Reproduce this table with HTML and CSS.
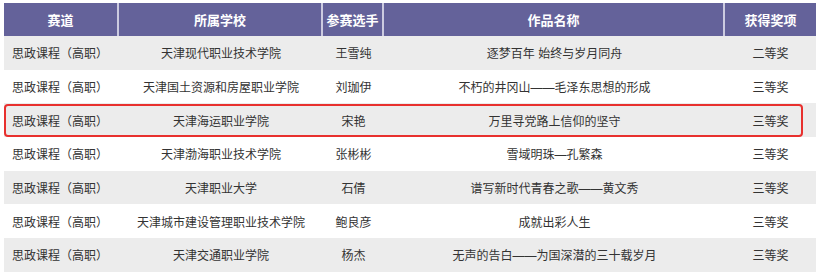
FILE: index.html
```html
<!DOCTYPE html>
<html lang="zh-CN">
<head>
<meta charset="utf-8">
<link rel="stylesheet" href="styles.css">
</head>
<body>
<div class="table">
  <div class="row head">
    <div class="cell">赛道</div>
    <div class="cell">所属学校</div>
    <div class="cell">参赛选手</div>
    <div class="cell">作品名称</div>
    <div class="cell">获得奖项</div>
  </div>
  <div class="row alt">
    <div class="cell first">思政课程（高职）</div>
    <div class="cell">天津现代职业技术学院</div>
    <div class="cell">王雪纯</div>
    <div class="cell">逐梦百年 始终与岁月同舟</div>
    <div class="cell">二等奖</div>
  </div>
  <div class="row">
    <div class="cell first">思政课程（高职）</div>
    <div class="cell">天津国土资源和房屋职业学院</div>
    <div class="cell">刘珈伊</div>
    <div class="cell">不朽的井冈山——毛泽东思想的形成</div>
    <div class="cell">三等奖</div>
  </div>
  <div class="row alt marked">
    <div class="cell first">思政课程（高职）</div>
    <div class="cell">天津海运职业学院</div>
    <div class="cell">宋艳</div>
    <div class="cell">万里寻党路上信仰的坚守</div>
    <div class="cell">三等奖</div>
  </div>
  <div class="row">
    <div class="cell first">思政课程（高职）</div>
    <div class="cell">天津渤海职业技术学院</div>
    <div class="cell">张彬彬</div>
    <div class="cell">雪域明珠—孔繁森</div>
    <div class="cell">三等奖</div>
  </div>
  <div class="row alt">
    <div class="cell first">思政课程（高职）</div>
    <div class="cell">天津职业大学</div>
    <div class="cell">石倩</div>
    <div class="cell">谱写新时代青春之歌——黄文秀</div>
    <div class="cell">三等奖</div>
  </div>
  <div class="row">
    <div class="cell first">思政课程（高职）</div>
    <div class="cell">天津城市建设管理职业技术学院</div>
    <div class="cell">鲍良彦</div>
    <div class="cell">成就出彩人生</div>
    <div class="cell">三等奖</div>
  </div>
  <div class="row alt">
    <div class="cell first">思政课程（高职）</div>
    <div class="cell">天津交通职业学院</div>
    <div class="cell">杨杰</div>
    <div class="cell">无声的告白——为国深潜的三十载岁月</div>
    <div class="cell">三等奖</div>
  </div>
</div>
</body>
</html>
```

FILE: styles.css
```css
html, body {
  margin: 0;
  padding: 0;
  background: #ffffff;
}
body {
  padding: 3px 0 0 4px;
  font-family: "Liberation Sans", "Noto Sans CJK SC", sans-serif;
  font-size: 12px;
  color: #333333;
  overflow: hidden;
}
.table {
  width: 812px;
  display: flex;
  flex-direction: column;
}
.row {
  display: grid;
  grid-template-columns: 115px 204px 61px 341px 91px;
  height: 33.7px;
  align-items: center;
  background: #ffffff;
}
.row.alt {
  background: #ececec;
}
.row.head {
  height: 33px;
  background: #64629a;
  color: #ffffff;
  font-weight: bold;
  font-size: 13px;
  align-items: stretch;
}
.head .cell {
  display: flex;
  align-items: center;
  justify-content: center;
  border-right: 2px solid #cccbe0;
}
.head .cell:last-child {
  border-right: none;
}
.cell {
  text-align: center;
  white-space: nowrap;
}
.cell.first {
  text-align: left;
  padding-left: 8px;
}
.row.marked {
  position: relative;
}
.row.marked::after {
  content: "";
  position: absolute;
  left: 0;
  top: 1px;
  right: 13px;
  bottom: 0;
  border: 2px solid #e8302e;
  border-radius: 4px;
}
```
